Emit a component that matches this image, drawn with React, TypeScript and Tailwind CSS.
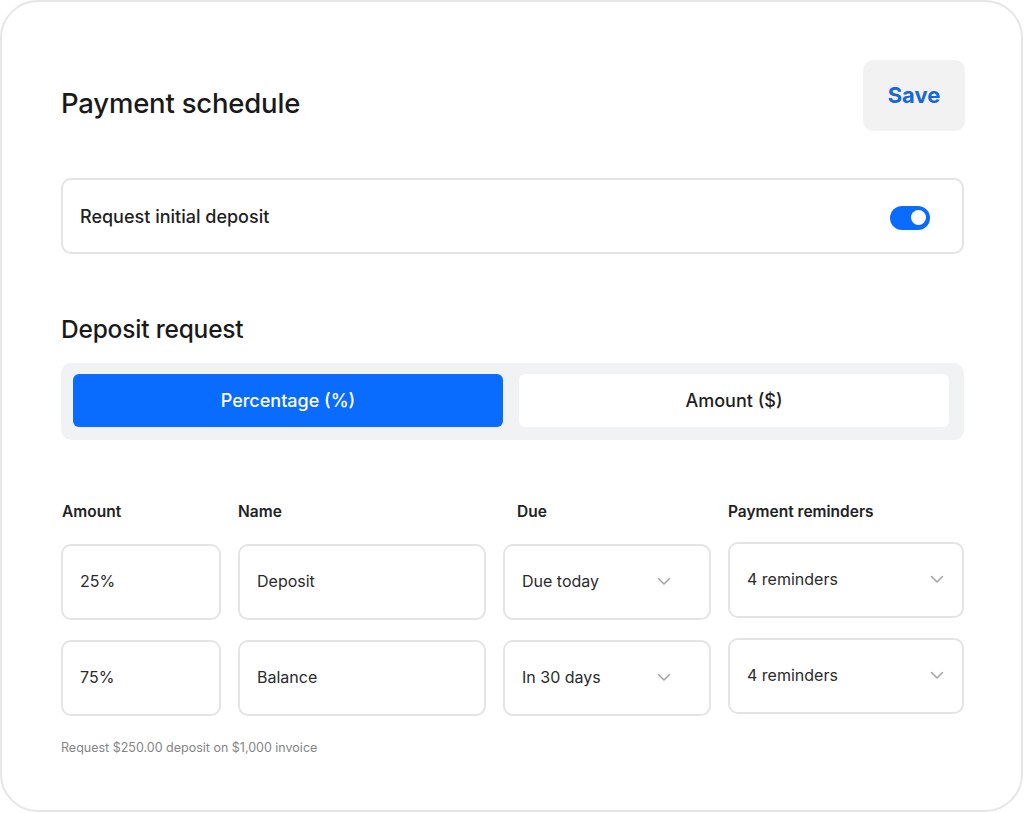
import React from 'react';

const font = { fontFamily: 'Inter, "Noto Sans", sans-serif' };

const cols = 'grid grid-cols-[160px_248px_208px_236px] gap-x-[17px]';

const Chevron = () => (
  <svg width="14" height="9" viewBox="0 0 14 9" fill="none" className="shrink-0">
    <path d="M1.5 1.5l5.5 5.5 5.5-5.5" stroke="#a3a3a3" strokeWidth="1.5" strokeLinecap="round" strokeLinejoin="round" />
  </svg>
);

const Field: React.FC<{ value: string; select?: 'due' | 'rem'; lift?: boolean }> = ({ value, select, lift }) => (
  <div
    className={`flex h-[76px] items-center justify-between rounded-[10px] border-2 border-[#e4e4e4] bg-white pb-[2px] pl-[17px] ${
      select === 'due' ? 'pr-[38px]' : 'pr-[18px]'
    } ${lift ? '-mt-[2px] mb-[2px]' : ''}`}
  >
    <span className="text-[16px] leading-5 text-[#2b2b2b]">{value}</span>
    {select && <Chevron />}
  </div>
);

const App: React.FC = () => {
  return (
    <div className="h-[813px] w-[1024px] bg-white" style={font}>
      <div className="h-[812px] w-[1023px] rounded-[38px] border-2 border-[#e6e6e6] bg-white pl-[59px] pr-[57px] pt-[58px]">
        {/* Header */}
        <div className="flex items-start justify-between">
          <h1 className="mt-[26px] text-[27.5px] font-medium leading-[34px] tracking-[-0.2px] text-[#1a1a1a]">
            Payment schedule
          </h1>
          <button className="mr-[-1px] h-[71px] w-[102px] rounded-[10px] bg-[#f2f2f2] text-[22px] font-bold text-[#1868d6]">
            Save
          </button>
        </div>

        {/* Deposit toggle */}
        <div className="mt-[47px] flex h-[76px] items-center justify-between rounded-[10px] border-2 border-[#e4e4e4] pl-[17px] pr-[32px]">
          <span className="text-[18px] font-medium text-[#1f1f1f]">Request initial deposit</span>
          <div className="relative mt-[3px] h-6 w-10 rounded-full bg-[#0a6cff]">
            <span className="absolute right-[4px] top-[4.5px] h-[15px] w-[15px] rounded-full bg-white" />
          </div>
        </div>

        <h2 className="mt-[60px] text-[24.5px] font-medium leading-[30px] tracking-[-0.2px] text-[#1a1a1a]">
          Deposit request
        </h2>

        {/* Segmented control */}
        <div className="mt-[19px] flex h-[77px] gap-[16px] rounded-[10px] bg-[#f1f2f3] pb-[13px] pl-[12px] pr-[15px] pt-[11px]">
          <button className="flex-1 rounded-[6px] bg-[#0a6cff] text-[18px] font-medium text-white">
            Percentage (%)
          </button>
          <button className="flex-1 rounded-[6px] bg-white text-[18px] font-medium text-[#1f1f1f]">
            Amount ($)
          </button>
        </div>

        {/* Schedule table */}
        <div className={`${cols} mt-[62px] text-[15.5px] font-semibold leading-5 text-[#222]`}>
          <div className="pl-[1px]">Amount</div>
          <div>Name</div>
          <div className="pl-[14px]">Due</div>
          <div>Payment reminders</div>
        </div>

        <div className={`${cols} mt-[22px] gap-y-[20px]`}>
          <Field value="25%" />
          <Field value="Deposit" />
          <Field value="Due today" select="due" />
          <Field value="4 reminders" select="rem" lift />

          <Field value="75%" />
          <Field value="Balance" />
          <Field value="In 30 days" select="due" />
          <Field value="4 reminders" select="rem" lift />
        </div>

        <p className="mt-[24px] text-[12.5px] leading-4 text-[#858585]">
          Request $250.00 deposit on $1,000 invoice
        </p>
      </div>
    </div>
  );
};

export default App;
